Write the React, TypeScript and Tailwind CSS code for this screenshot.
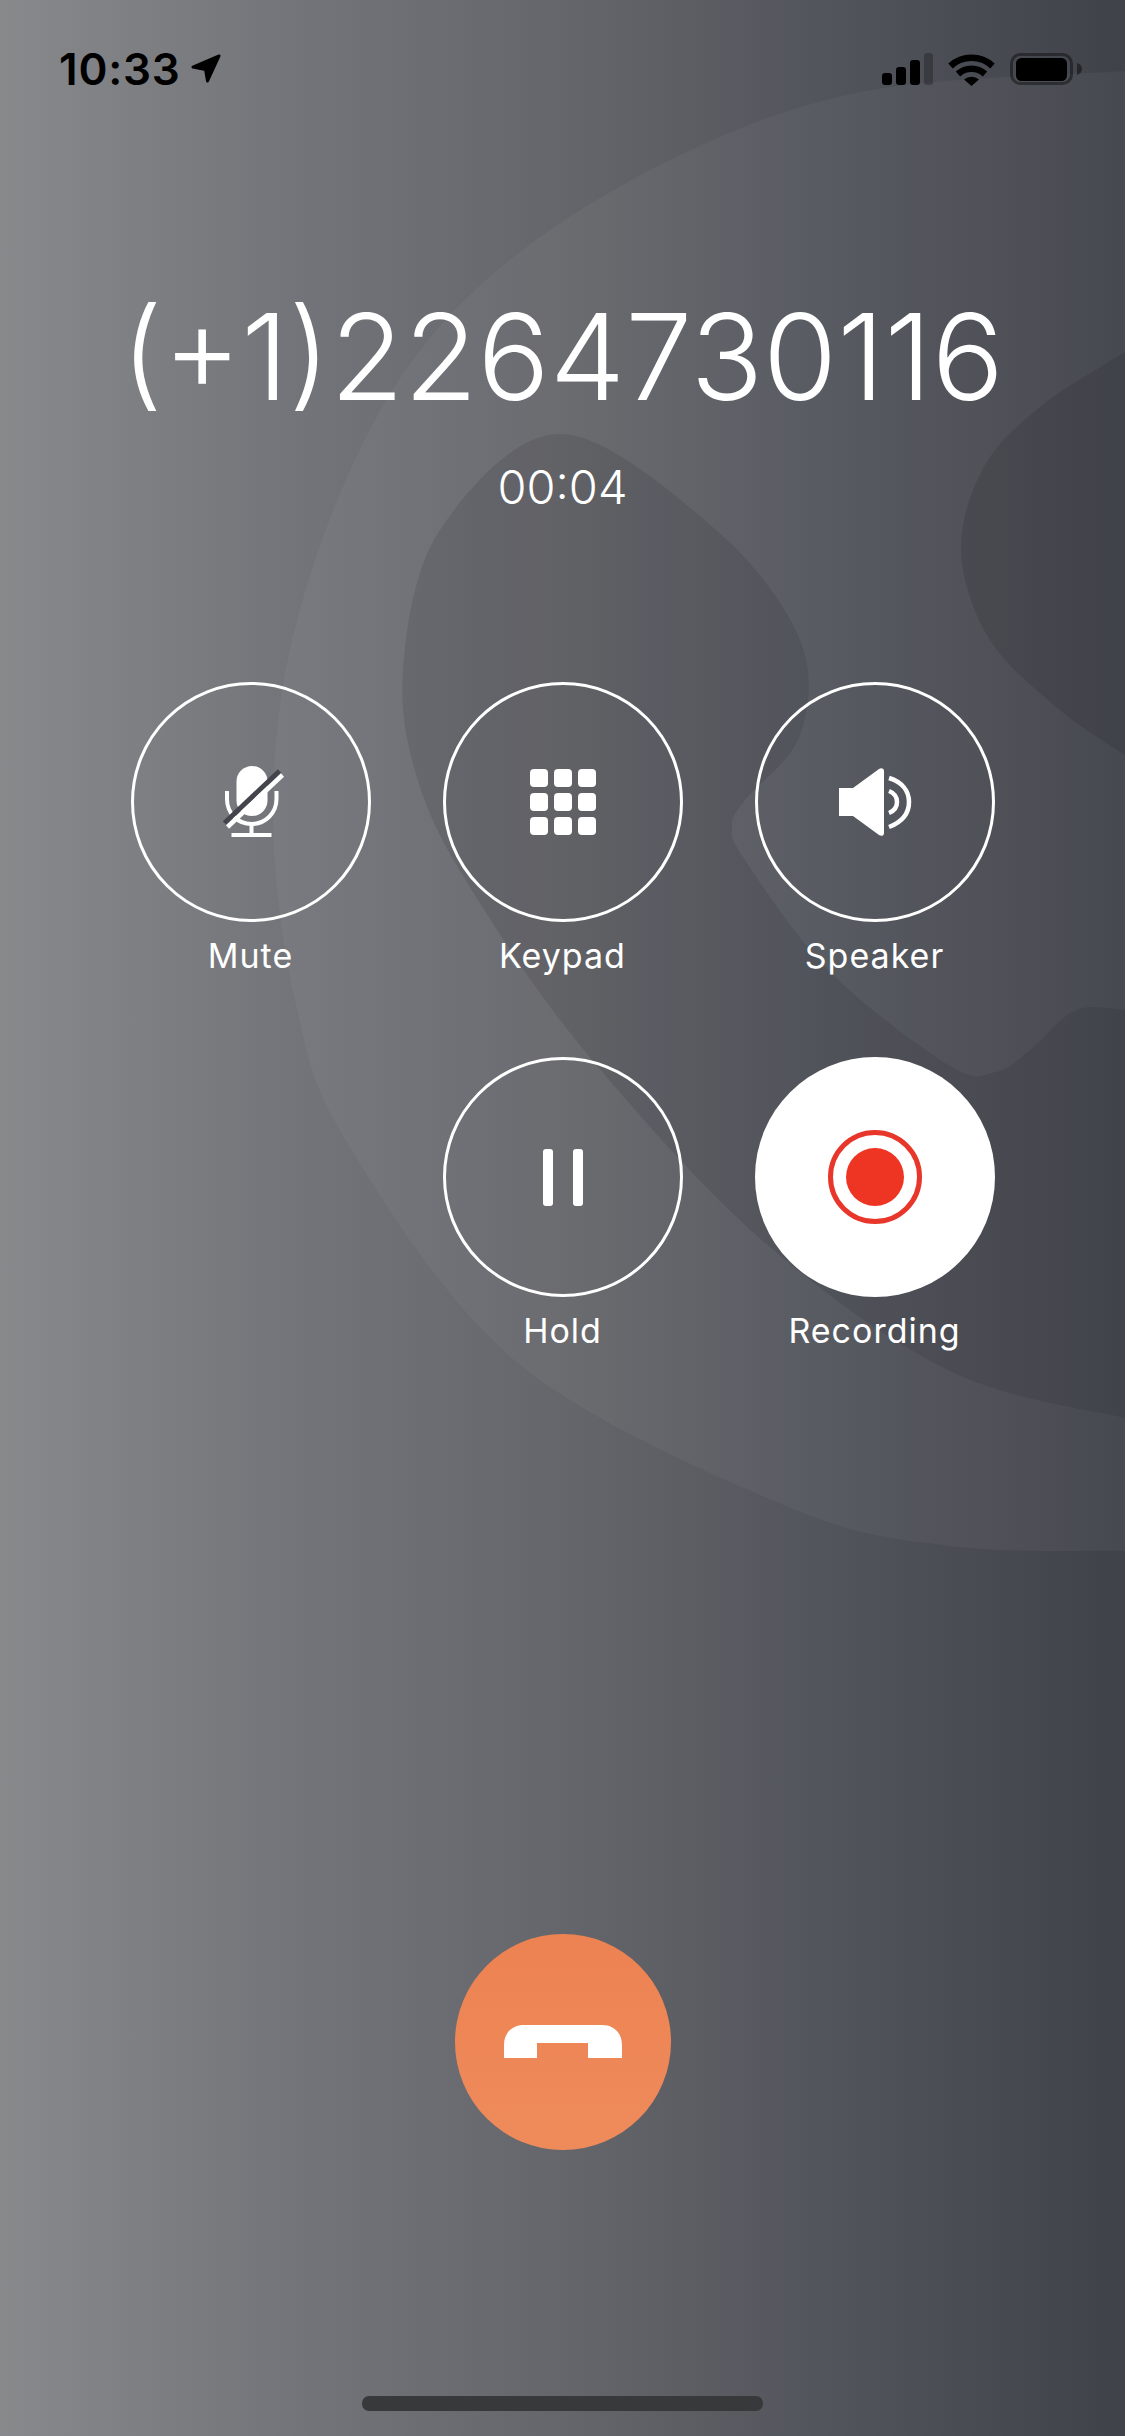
import React from "react";

type Pt = [number, number];

function smooth(points: Pt[]) {
  let d = `M${points[0][0]} ${points[0][1]}`;
  for (let i = 0; i < points.length - 1; i++) {
    const p0 = points[Math.max(i - 1, 0)];
    const p1 = points[i];
    const p2 = points[i + 1];
    const p3 = points[Math.min(i + 2, points.length - 1)];
    const c1x = p1[0] + (p2[0] - p0[0]) / 6;
    const c1y = p1[1] + (p2[1] - p0[1]) / 6;
    const c2x = p2[0] - (p3[0] - p1[0]) / 6;
    const c2y = p2[1] - (p3[1] - p1[1]) / 6;
    d += `C${c1x} ${c1y} ${c2x} ${c2y} ${p2[0]} ${p2[1]}`;
  }
  return d + "Z";
}

const ring: Pt[] = [
  [1125, 71], [861, 92], [660, 165], [486, 280], [375, 420], [297, 620], [273, 810], [295, 1000],
  [348, 1144], [518, 1363], [786, 1506], [950, 1546], [1125, 1551],
];
const handset: Pt[] = [
  [1125, 1418], [950, 1371], [763, 1241], [589, 1056], [478, 900], [420, 787], [403, 670],
  [440, 530], [560, 434], [716, 530], [800, 640], [800, 735], [745, 800], [732, 826], [745, 860],
  [830, 972], [950, 1066], [996, 1072], [1030, 1050], [1076, 1010], [1125, 1010],
];
const ear: Pt[] = [
  [1125, 352], [1040, 407], [984, 467], [961, 551], [990, 640], [1060, 710], [1125, 755],
];

function Background() {
  return (
    <svg className="absolute inset-0" width="1125" height="2436" viewBox="0 0 1125 2436" fill="none">
      <path d={smooth(ring)} fill="#ffffff" fillOpacity="0.04" />
      <path d={smooth(handset)} fill="#1f2028" fillOpacity="0.13" />
      <path d={smooth(ear)} fill="#1f2028" fillOpacity="0.16" />
    </svg>
  );
}

function StatusBar() {
  return (
    <div className="relative flex h-[100px] items-start justify-between pl-[59px] pr-[43px] pt-[47px] text-black">
      <div className="flex items-center gap-[9px]">
        <span className="font-['Inter',sans-serif] text-[44px] leading-[44px] font-semibold tracking-[0.8px]">10:33</span>
        <svg width="32" height="32" viewBox="189 53 33 33" fill="#000" stroke="#000" strokeWidth="3" strokeLinejoin="round">
          <path d="M219 56L192 67.5L205 70L207 82Z" />
        </svg>
      </div>
      <svg className="mt-[5px]" width="200" height="34" viewBox="882 52 200 34" fill="none">
        <rect x="882" y="73" width="10" height="12" rx="3" fill="#000" />
        <rect x="896" y="67" width="10" height="18" rx="3" fill="#000" />
        <rect x="910" y="60" width="10" height="25" rx="3" fill="#000" />
        <rect x="924" y="53" width="9" height="32" rx="3" fill="#000" fillOpacity="0.25" />
        <path d="M950.5 66A31 31 0 0 1 992.5 66" stroke="#000" strokeWidth="6.5" />
        <path d="M958 74A20 20 0 0 1 985 74" stroke="#000" strokeWidth="6.5" />
        <path d="M964 79.5A11.5 11.5 0 0 1 979 79.5L971.5 86Z" fill="#000" />
        <rect x="1011.5" y="54.5" width="60" height="29" rx="9" stroke="#000" strokeOpacity="0.4" strokeWidth="3" />
        <rect x="1016" y="58" width="51" height="23" rx="5.5" fill="#000" />
        <path d="M1077 63C1080 64 1082 66 1082 69C1082 72 1080 74 1077 75Z" fill="#000" fillOpacity="0.45" />
      </svg>
    </div>
  );
}

function MicIcon() {
  return (
    <svg width="68" height="76" viewBox="216.5 764 68 76" fill="none">
      <rect x="236" y="766" width="31" height="50" rx="15.5" fill="#fff" />
      <path d="M226.5 791V799C226.5 813 237 824 251 824C265 824 276 813 276 799V791" stroke="#fff" strokeWidth="4" />
      <path d="M251 824V835" stroke="#fff" strokeWidth="4" />
      <path d="M231 835H271" stroke="#fff" strokeWidth="4" />
      <path d="M224 823L279 771" stroke="#44454c" strokeWidth="5" />
      <path d="M227 827L282 775" stroke="#fff" strokeWidth="4.5" />
    </svg>
  );
}

function KeypadIcon() {
  const cells = [0, 1, 2, 3, 4, 5, 6, 7, 8];
  return (
    <div className="grid grid-cols-[18px_18px_18px] gap-[6px]">
      {cells.map((c) => (
        <div key={c} className="h-[18px] w-[18px] rounded-[4px] bg-white" />
      ))}
    </div>
  );
}

function SpeakerIcon() {
  return (
    <svg width="74" height="70" viewBox="838 767 74 70" fill="none">
      <path d="M839 788H853L879 769C881 767.5 884 768 884 771V833C884 836 881 836.5 879 835L853 816H839Z" fill="#fff" />
      <path d="M889 778C902 782 909 791 909 802C909 813 902 822 889 827" stroke="#fff" strokeWidth="4.5" />
      <path d="M889 791C894 793 897 797 897 802C897 807 894 811 889 813" stroke="#fff" strokeWidth="4.5" />
    </svg>
  );
}

function PauseIcon() {
  return (
    <div className="flex gap-[20px]">
      <div className="h-[57px] w-[10px] rounded-[3px] bg-white" />
      <div className="h-[57px] w-[10px] rounded-[3px] bg-white" />
    </div>
  );
}

function RecordIcon() {
  return (
    <div className="flex h-[94px] w-[94px] items-center justify-center rounded-full border-[5px] border-[#e8372a]">
      <div className="h-[58px] w-[58px] rounded-full bg-[#ee3524]" />
    </div>
  );
}

function CallButton({ label, active, children }: { label: string; active?: boolean; children: React.ReactNode }) {
  return (
    <div className="flex w-[240px] flex-col items-center">
      <div
        className={
          active
            ? "flex h-[240px] w-[240px] items-center justify-center rounded-full bg-white"
            : "flex h-[240px] w-[240px] items-center justify-center rounded-full border-[3px] border-white"
        }
      >
        {children}
      </div>
      <span className="mt-[14px] font-['Inter',sans-serif] text-[34px] leading-[40px] font-normal tracking-[1px] whitespace-nowrap text-white">{label}</span>
    </div>
  );
}

export default function App() {
  return (
    <div className="relative h-[2436px] w-[1125px] overflow-hidden bg-[linear-gradient(90deg,#88898b_0%,#74757a_25%,#65666b_50%,#55575e_70%,#40424a_100%)]">
      <Background />
      <div className="relative flex h-full flex-col">
        <StatusBar />
        <div className="mt-[192px] text-center font-['Inter',sans-serif] text-[120px] leading-[130px] font-light tracking-[0px] text-white">
          (+1)2264730116
        </div>
        <div className="mt-[37px] text-center font-['Inter',sans-serif] text-[47px] leading-[56px] font-light text-white">
          00:04
        </div>
        <div className="mt-[167px] grid grid-cols-[240px_240px_240px] justify-center gap-x-[72px] gap-y-[81px]">
          <CallButton label="Mute">
            <MicIcon />
          </CallButton>
          <CallButton label="Keypad">
            <KeypadIcon />
          </CallButton>
          <CallButton label="Speaker">
            <SpeakerIcon />
          </CallButton>
          <div />
          <CallButton label="Hold">
            <PauseIcon />
          </CallButton>
          <CallButton label="Recording" active>
            <RecordIcon />
          </CallButton>
        </div>
        <div className="mt-[583px] flex h-[216px] w-[216px] items-center justify-center self-center rounded-full bg-[linear-gradient(180deg,#ed8252,#ef8b5b)]">
          <svg className="mb-[2px]" width="118" height="33" viewBox="504 2023 118 33">
            <path d="M504 2056V2043C504 2031 512 2023 524 2023H602C614 2023 622 2031 622 2043V2056H588V2041H537V2056Z" fill="#fff" />
          </svg>
        </div>
        <div className="mt-[246px] h-[15px] w-[401px] self-center rounded-[7px] bg-[#38393a]" />
      </div>
    </div>
  );
}
